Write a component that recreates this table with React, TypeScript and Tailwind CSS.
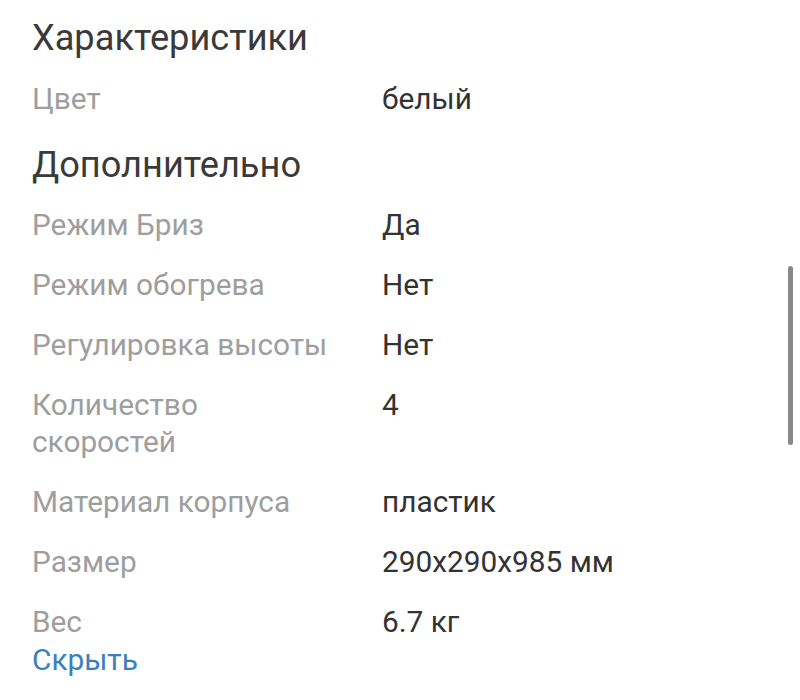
import React from "react";

const rows1: [string, string][] = [["Цвет", "белый"]];
const rows2: [string, string][] = [
  ["Режим Бриз", "Да"],
  ["Режим обогрева", "Нет"],
  ["Регулировка высоты", "Нет"],
  ["Количество скоростей", "4"],
  ["Материал корпуса", "пластик"],
  ["Размер", "290x290x985 мм"],
  ["Вес", "6.7 кг"],
];

function Row({ label, value }: { label: string; value: string }) {
  return (
    <div className="flex">
      <div className="w-[350px] shrink-0 pr-[44px] text-[#9e9e9e]">{label}</div>
      <div className="text-[#333333]">{value}</div>
    </div>
  );
}

export default function App() {
  return (
    <div
      className="relative w-[800px] h-[700px] bg-white overflow-hidden text-[29.8px] leading-[37px]"
      style={{ fontFamily: "Roboto, 'Noto Sans', sans-serif" }}
    >
      <div className="pl-[32px] pt-[16px]">
        <h2 className="text-[36.2px] leading-[44px] text-[#3a3a3a]">Характеристики</h2>
        <div className="mt-[20px] flex flex-col gap-[23px]">
          {rows1.map(([l, v]) => (
            <Row key={l} label={l} value={v} />
          ))}
        </div>
        <h2 className="mt-[26px] text-[36.2px] leading-[44px] text-[#3a3a3a]">Дополнительно</h2>
        <div className="mt-[19px] flex flex-col gap-[23px]">
          {rows2.map(([l, v]) => (
            <Row key={l} label={l} value={v} />
          ))}
        </div>
        <div className="mt-[1px] text-[#3a7fc0]">Скрыть</div>
      </div>
      <div className="absolute left-[788px] top-[266px] w-[5px] h-[179px] rounded-full bg-[#888888]" />
    </div>
  );
}
